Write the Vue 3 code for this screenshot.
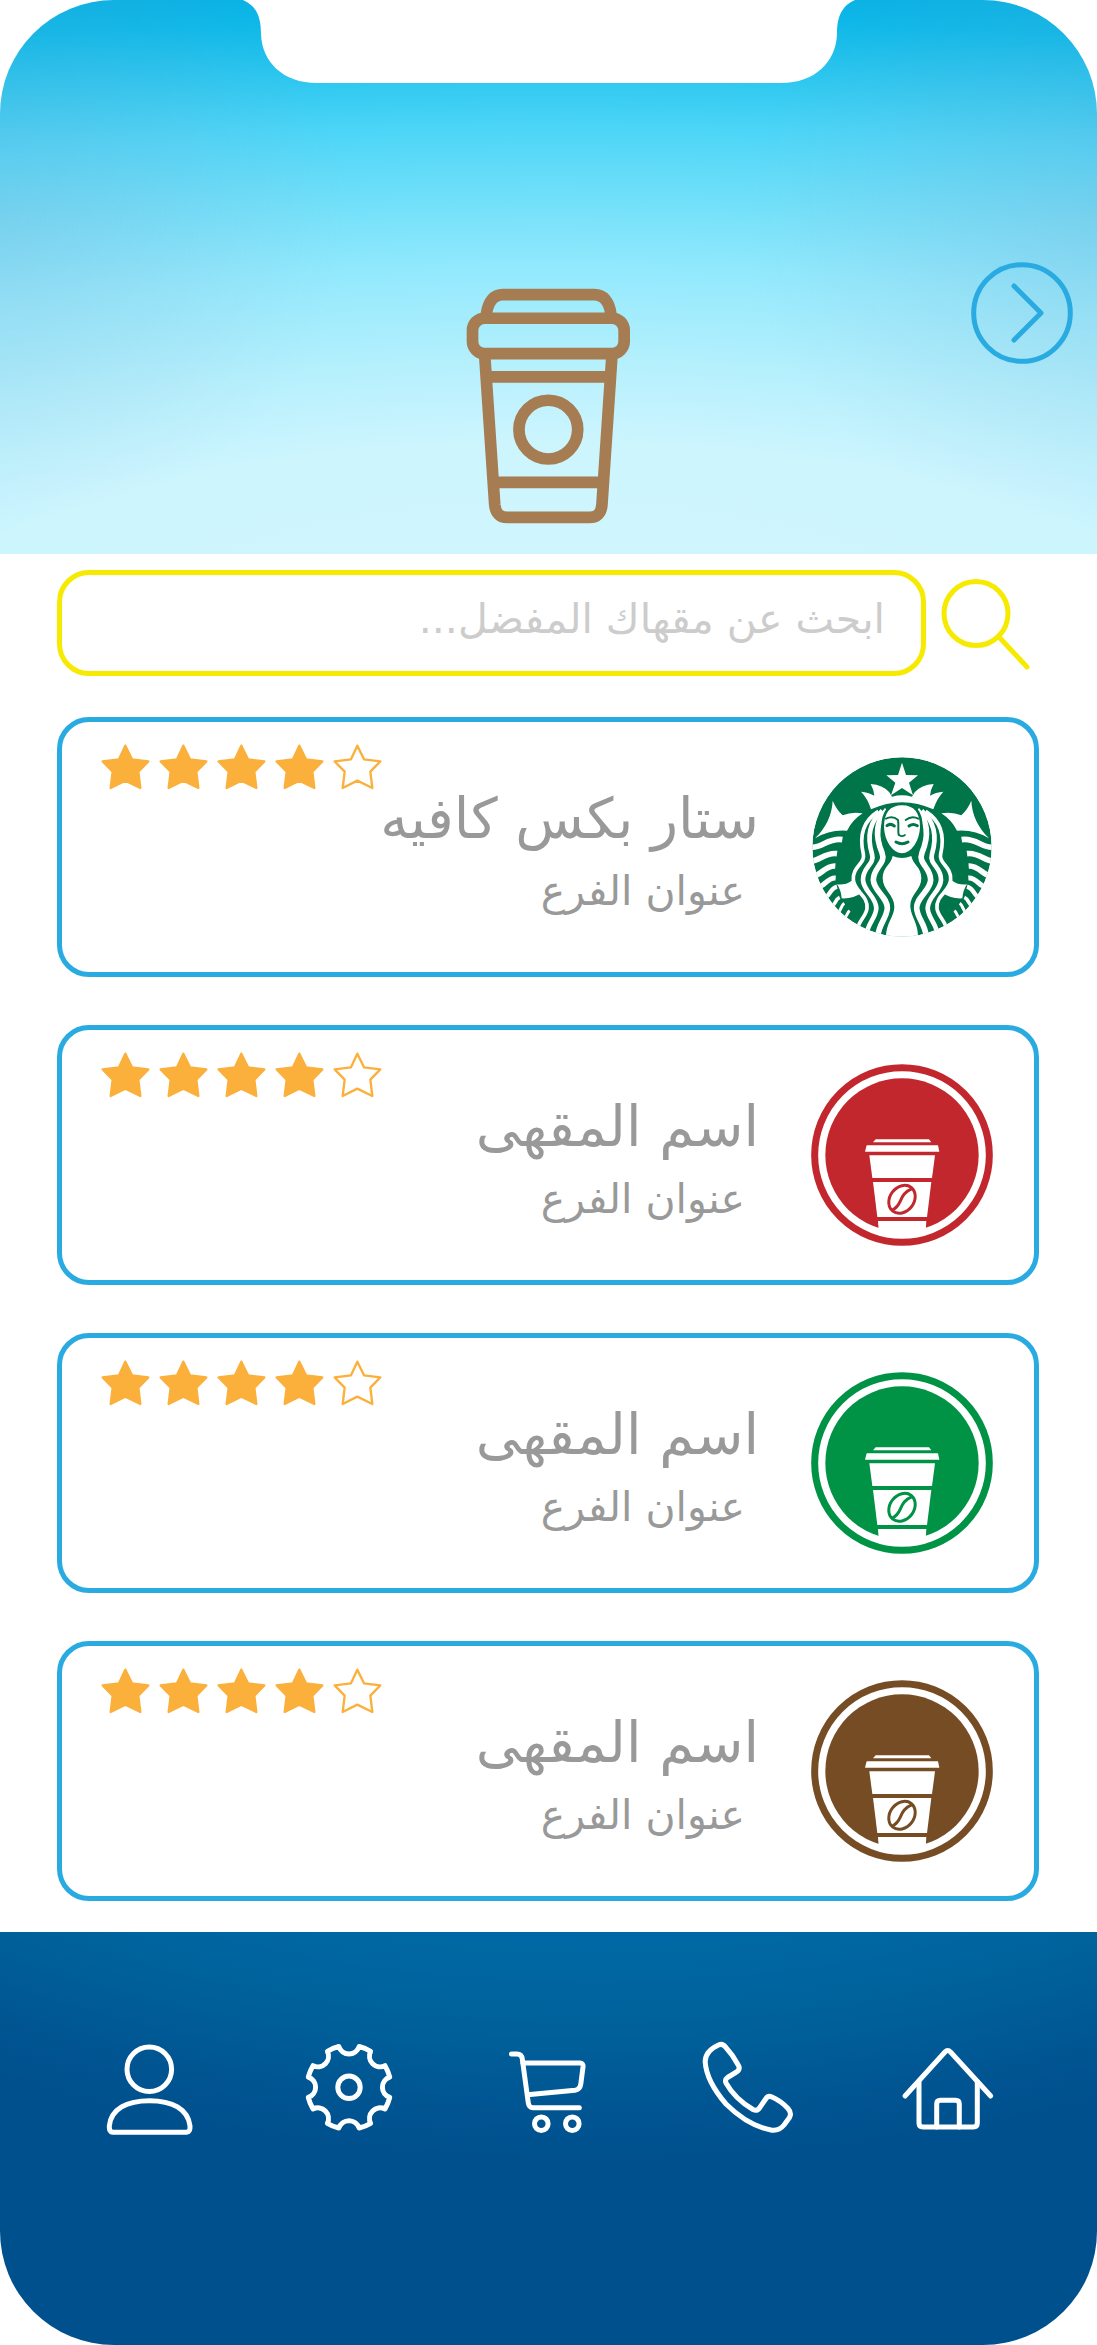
<script setup>
import { ref } from 'vue'

const query = ref('')

const cafes = [
  { name: 'ستار بكس كافيه', branch: 'عنوان الفرع', rating: 4, logo: 'siren' },
  { name: 'اسم المقهى', branch: 'عنوان الفرع', rating: 4, logo: 'cup', color: '#c1272d' },
  { name: 'اسم المقهى', branch: 'عنوان الفرع', rating: 4, logo: 'cup', color: '#009245' },
  { name: 'اسم المقهى', branch: 'عنوان الفرع', rating: 4, logo: 'cup', color: '#754c24' },
]

// Gear outline: eight teeth separated by round bites.
function gearPath(cx, cy, r, half, bite) {
  const at = (deg) => {
    const a = (deg * Math.PI) / 180
    return `${(cx + r * Math.sin(a)).toFixed(2)} ${(cy - r * Math.cos(a)).toFixed(2)}`
  }
  let d = `M${at(-half)}`
  for (let i = 0; i < 8; i++) {
    d += `A${bite} ${bite} 0 0 0 ${at(i * 45 + half)}A${r} ${r} 0 0 1 ${at((i + 1) * 45 - half)}`
  }
  return d + 'Z'
}
const gear = gearPath(50, 49.3, 42, 14, 10.7)
</script>

<template>
  <div class="screen">
    <header class="hero">
      <svg class="notch" viewBox="0 0 612 83" aria-hidden="true">
        <path d="M0 0C14 6 18 18 18 34C19 62 40 83 74 83H538C572 83 593 62 594 34C594 18 598 6 612 0Z" fill="#fff" />
      </svg>
      <svg class="hero-cup" viewBox="70 50 506 714" aria-hidden="true">
        <g fill="none" stroke="#a67c52" stroke-width="35">
          <path d="M137 132C142 92 160 73 186 73H460C487 73 505 92 510 132" />
          <rect x="95.500" y="143.500" width="454" height="106" rx="36" />
          <path d="M132 255L162 702Q166 740 200 740H445Q480 740 483 702L513 255" />
          <path d="M140 319H505M160 635H485" />
          <circle cx="322.500" cy="477" r="88" />
        </g>
      </svg>
      <button class="next" type="button" aria-label="رجوع">
        <svg viewBox="0 0 102 102" aria-hidden="true">
          <g fill="none" stroke="#29abe2" stroke-width="5" stroke-linecap="round" stroke-linejoin="round">
            <circle cx="51" cy="51" r="48.300" />
            <path d="M43 24L70 51L43 78" />
          </g>
        </svg>
      </button>
    </header>

    <main>
      <form class="search" role="search" @submit.prevent>
        <input v-model="query" dir="rtl" type="text" placeholder="ابحث عن مقهاك المفضل..." aria-label="ابحث عن مقهاك المفضل" />
        <button type="submit" aria-label="بحث">
          <svg viewBox="0 0 90 97" aria-hidden="true">
            <g fill="none" stroke="#f5ea00" stroke-width="5" stroke-linecap="round">
              <circle cx="35" cy="38.500" r="32" />
              <path d="M58 62L86 92" />
            </g>
          </svg>
        </button>
      </form>

      <ul class="cafes">
        <li v-for="(cafe, i) in cafes" :key="i" class="card">
          <div class="stars" role="img" :aria-label="`${cafe.rating} / 5`">
            <svg v-for="n in 5" :key="n" viewBox="181 132 147 138">
              <path
                d="M254 137L274 178L323 184L293 215L299 264L254 242L210 264L216 215L186 184L235 178Z"
                :fill="n <= cafe.rating ? '#fbb03b' : 'none'"
                stroke="#fbb03b"
                stroke-width="7"
                stroke-linejoin="round"
              />
            </svg>
          </div>

          <div class="info" dir="rtl">
            <h2>{{ cafe.name }}</h2>
            <p>{{ cafe.branch }}</p>
          </div>

          <svg v-if="cafe.logo === 'siren'" class="logo" viewBox="90 78 546 546" aria-hidden="true">
            <defs>
              <clipPath id="siren-clip"><circle cx="363" cy="351" r="269" /></clipPath>
              <g id="siren-half">
                <path d="M155 212Q166 238 185 256Q213 244 245 250Q214 270 198 302Q146 298 102 325Q152 276 155 212Z" fill="#fff" />
                <g fill="none" stroke="#fff" stroke-width="17">
                  <path d="M88 351C118 358 142 322 184 329" />
                  <path d="M88 393C112 396 132 366 168 371" />
                  <path d="M98 436C118 438 132 406 163 408" />
                  <path d="M112 470C130 472 138 442 164 444" stroke-width="15" />
                  <path d="M132 502C146 500 146 476 168 470" stroke-width="13" />
                  <path d="M152 528C164 524 162 508 176 502" stroke-width="11" />
                  <path d="M170 548C182 542 178 528 190 520" stroke-width="9" />
                  <path d="M188 566C200 560 196 550 206 542" stroke-width="9" />
                </g>
                <path d="M168 463Q193 466 212 452Q222 476 242 488Q216 507 182 505Q180 480 168 463Z" fill="#fff" />
                <g fill="none" stroke="#fff" stroke-width="14">
                  <path d="M292 244C243 275 236 325 247 372C254 402 214 408 217 450C220 485 262 496 258 535C256 560 228 575 226 610" stroke-width="11" />
                  <path d="M304 242C262 278 259 325 273 372C282 404 245 410 246 450C248 485 286 500 286 535C284 565 260 580 256 615" />
                  <path d="M318 240C284 275 283 320 303 368C316 402 277 410 277 450C279 485 320 500 319 535C317 565 294 580 290 620" stroke-width="17" />
                </g>
              </g>
            </defs>
            <g clip-path="url(#siren-clip)">
              <circle cx="363" cy="351" r="269" fill="#00754a" />
              <use href="#siren-half" />
              <use href="#siren-half" transform="matrix(-1 0 0 1 726 0)" />
              <path d="M335 378Q363 390 391 378C396 405 421 410 421 445C421 480 386 495 388 530C390 560 412 580 411 622H315C314 580 340 560 340 530C340 495 305 480 305 445C305 410 330 405 335 378Z" fill="#fff" />
              <path d="M363 222C404 222 421 250 421 292C419 336 394 372 363 374C332 372 307 336 305 292C305 250 322 222 363 222Z" fill="#fff" stroke="#00754a" stroke-width="8" />
              <path d="M240 185Q262 186 280 197Q278 178 269 162Q305 164 325 187L333 200Q363 192 393 200L401 187Q421 164 458 162Q449 178 447 197Q464 186 487 185Q468 205 457 238Q363 195 270 238Q260 205 240 185Z" fill="#fff" />
              <path d="M363 98L375 135L411 136L384 158L396 196L363 174L330 196L343 158L316 136L351 135Z" fill="#fff" />
              <g fill="none" stroke="#00754a" stroke-linecap="round">
                <path d="M315 266Q335 256 351 270C354 288 350 300 353 314" stroke-width="6" />
                <path d="M374 270Q392 256 412 266" stroke-width="6" />
                <path d="M318 287Q328 279 340 288M384 288Q396 279 409 287" stroke-width="9" />
                <path d="M354 315Q363 322 372 315" stroke-width="5" />
                <path d="M345 336Q363 346 381 336" stroke-width="9" />
              </g>
            </g>
          </svg>

          <svg v-else class="logo" viewBox="90 71 546 546" aria-hidden="true">
            <circle cx="363" cy="344" r="262" fill="#fff" :stroke="cafe.color" stroke-width="21" />
            <circle cx="363" cy="344" r="230" :fill="cafe.color" />
            <g fill="#fff">
              <path d="M284 297H444L451 306H276Z" />
              <path d="M257 315H471L475 334H252Z" />
              <path d="M265 345H462L453 413H274Z" />
              <path d="M276 425H451L438 530H289Z" />
              <path d="M291 542H436L433 585H294Z" />
            </g>
            <g fill="none" :stroke="cafe.color" stroke-width="9">
              <ellipse cx="363" cy="477" rx="36" ry="45" transform="rotate(38 363 477)" />
              <path d="M334 509C367 494 350 462 395 444" />
            </g>
          </svg>
        </li>
      </ul>
    </main>

    <nav class="tabs" aria-label="القائمة">
      <a href="#profile" aria-label="الحساب">
        <svg viewBox="0 0 100 100">
          <circle cx="50.300" cy="31.300" r="22.300" />
          <path d="M14 94.300H87.500Q91.500 94 91 88C89 71 73 62.700 50.500 62.700S12 71 10.300 88Q10 94 14 94.300Z" />
        </svg>
      </a>
      <a href="#settings" aria-label="الإعدادات">
        <svg viewBox="0 0 100 100">
          <circle cx="50" cy="49.300" r="11.200" />
          <path :d="gear" />
        </svg>
      </a>
      <a href="#cart" aria-label="السلة">
        <svg viewBox="0 0 100 100">
          <path d="M13.500 16H19Q23.600 16 24.300 21L30.300 65Q31 69.700 35 69.700H81.300" />
          <path d="M25 25H82Q85.300 25 85 29L82.800 46Q82 51.500 77 52.200L29.500 56.700" />
          <circle cx="43.300" cy="85.700" r="6.800" />
          <circle cx="74.300" cy="85.700" r="6.800" />
        </svg>
      </a>
      <a href="#call" aria-label="اتصال">
        <svg viewBox="0 0 100 100">
          <path d="M27.500 9Q24.500 5 20.500 7Q7 13 7.200 24C8 37 16 52 28 66C40 78 56 89 74 92.200Q81 93 86 87L91.500 79.500Q94 75 90 70.500Q83 63 73.500 58.800Q70 57.500 68 60.500L61.500 70Q59 73.500 55 71.500Q37 61 28 45Q26.500 41.500 29.500 39.500L38.500 34Q42.500 31 40.500 27.500Q35 17 27.500 9Z" />
        </svg>
      </a>
      <a href="#home" aria-label="الرئيسية">
        <svg viewBox="0 0 100 100">
          <path d="M7 58L47 14Q49.700 11 52.500 14L92.700 58" />
          <path d="M21 44V85Q21 89 25 89H75.300Q79.300 89 79.300 85V44" />
          <path d="M38.700 89V66Q38.700 62.300 42.500 62.300H57.500Q61.300 62.300 61.300 66V89" />
        </svg>
      </a>
    </nav>
  </div>
</template>

<style>
body {
  margin: 0;
  background: #fff;
}
</style>

<style scoped>
.screen {
  font-family: "DejaVu Sans", sans-serif;
  color: #999;
}

button {
  padding: 0;
  border: 0;
  background: none;
  cursor: pointer;
}

svg {
  display: block;
}

.hero {
  position: relative;
  display: grid;
  grid-template-columns: 1fr auto 1fr;
  align-items: start;
  padding: 262px 24px 29px;
  border-radius: 114px 114px 0 0;
  background:
    radial-gradient(350px 300px at 0 40%, rgba(150, 170, 205, 0.25), transparent),
    radial-gradient(350px 300px at 100% 40%, rgba(150, 170, 205, 0.25), transparent),
    radial-gradient(2200px 610px at 50% 110%, #cff6ff 10%, #cdf5fe 27%, #b6f0fd 40%, #92e9fd 56%, #6cdef9 69%, #4cd5f7 79%, #30c8f0 87%, #0db8e8 97%, #0aafe2 103%);
}

.notch {
  position: absolute;
  top: 0;
  left: 50%;
  width: 612px;
  margin-left: -306px;
}

.hero-cup {
  grid-column: 2;
  width: 169px;
  margin-top: 25px;
}

.next {
  justify-self: end;
  width: 102px;
}

.search {
  display: flex;
  align-items: center;
  gap: 15px;
  padding: 16px 66px 0 57px;
}

.search input {
  flex: 1;
  min-width: 0;
  box-sizing: border-box;
  height: 106px;
  padding: 0 36px 8px;
  border: 5px solid #f5ea00;
  border-radius: 32px;
  outline: 0;
  background: none;
  color: #999;
  font: 41px "DejaVu Sans", sans-serif;
}

.search input::placeholder {
  color: #ccc;
  opacity: 1;
}

.search button {
  width: 90px;
}

.cafes {
  display: flex;
  flex-direction: column;
  gap: 48px;
  margin: 0;
  padding: 41px 58px 31px 57px;
  list-style: none;
}

.card {
  display: flex;
  align-items: flex-start;
  box-sizing: border-box;
  min-height: 260px;
  padding: 22px 41px 0 39px;
  border: 5px solid #29abe2;
  border-radius: 32px;
}

.stars {
  display: flex;
  gap: 9px;
}

.stars svg {
  width: 49px;
}

.info {
  flex: 1;
  min-width: 0;
  margin: 39px 52px 0 0;
  white-space: nowrap;
}

.info h2,
.info p {
  margin: 0;
  font-weight: 400;
  line-height: 72px;
}

.info h2 {
  font-size: 56px;
}

.info p {
  padding-right: 14px;
  font-size: 41px;
}

.logo {
  width: 182px;
  margin-top: 12px;
}

.tabs {
  display: flex;
  padding: 106px 49px 207px;
  border-radius: 0 0 114px 114px;
  background: radial-gradient(1250px 700px at 54% -472px, #0069a5 68%, #00629b 80%, #005692 92%, #00508e 100%);
}

.tabs a {
  flex: 1;
  display: flex;
  justify-content: center;
}

.tabs svg {
  width: 100px;
  fill: none;
  stroke: #fff;
  stroke-width: 5;
  stroke-linecap: round;
  stroke-linejoin: round;
}
</style>
